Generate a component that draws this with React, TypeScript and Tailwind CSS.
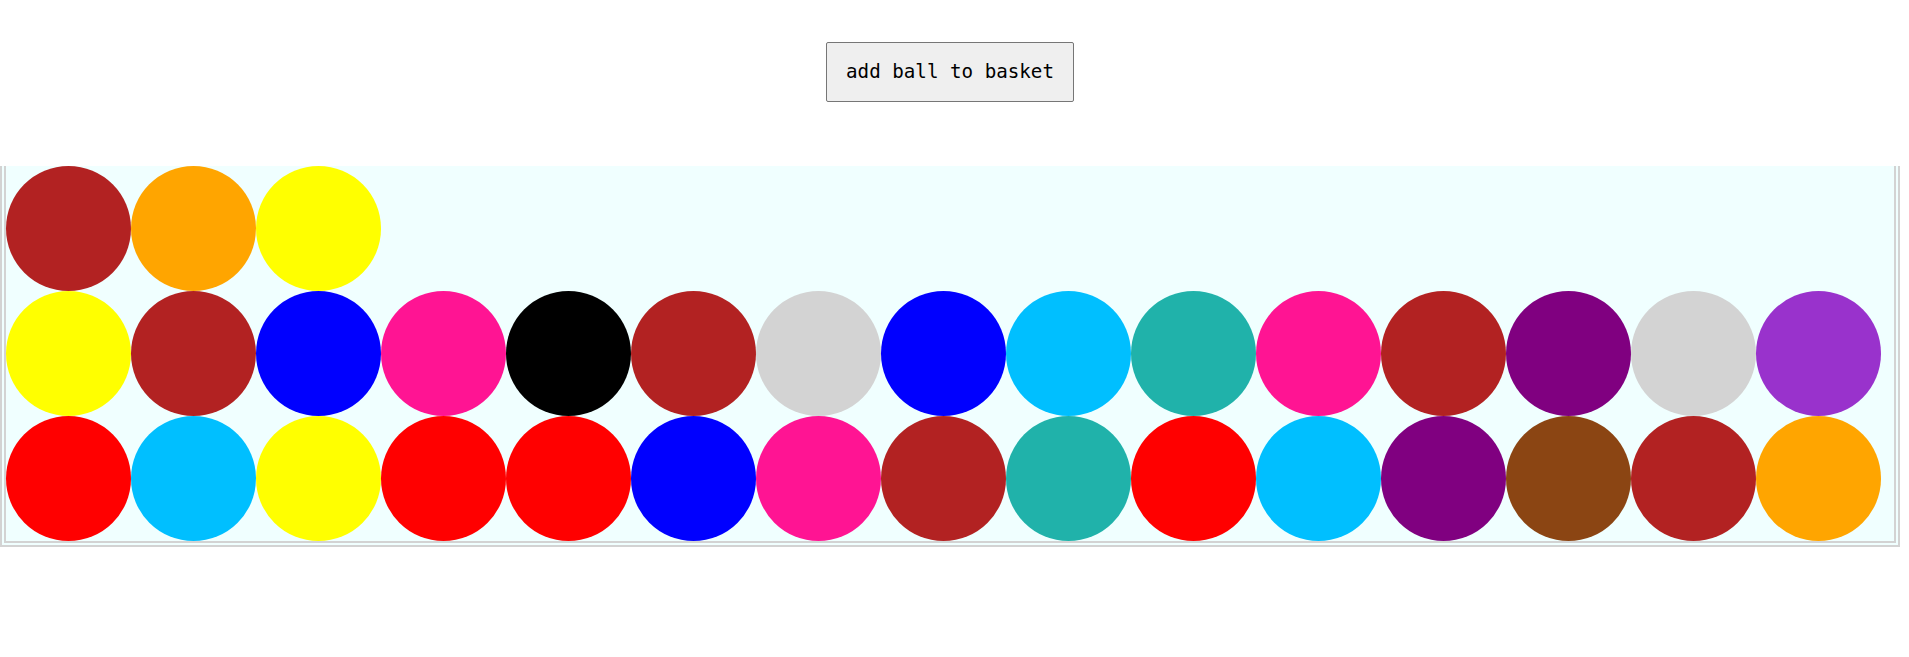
const bottom = ["#ff0000","#00bfff","#ffff00","#ff0000","#ff0000","#0000ff","#ff1493","#b22222","#20b2aa","#ff0000","#00bfff","#800080","#8b4513","#b22222","#ffa500"];
const middle = ["#ffff00","#b22222","#0000ff","#ff1493","#000000","#b22222","#d3d3d3","#0000ff","#00bfff","#20b2aa","#ff1493","#b22222","#800080","#d3d3d3","#9932cc"];
const top = ["#b22222","#ffa500","#ffff00"];
const balls = [...bottom, ...middle, ...top];

export default function App() {
  return (
    <div className="w-[1900px] bg-white">
      <div className="flex justify-center pt-[42px] h-[166px]">
        <button
          className="h-[60px] w-[248px] bg-[#efefef] border border-[#767676] rounded-[2px] text-black text-[19.2px] leading-none"
          style={{ fontFamily: '"DejaVu Sans Mono", "Liberation Mono", monospace' }}
        >
          add ball to basket
        </button>
      </div>
      <div className="w-[1900px] bg-[#f0ffff] border-[6px] border-t-0 border-double border-[#d3d3d3] flex flex-wrap-reverse content-start">
        {balls.map((c, i) => (
          <div key={i} className="w-[125px] h-[125px] rounded-full" style={{ backgroundColor: c }} />
        ))}
      </div>
    </div>
  );
}
